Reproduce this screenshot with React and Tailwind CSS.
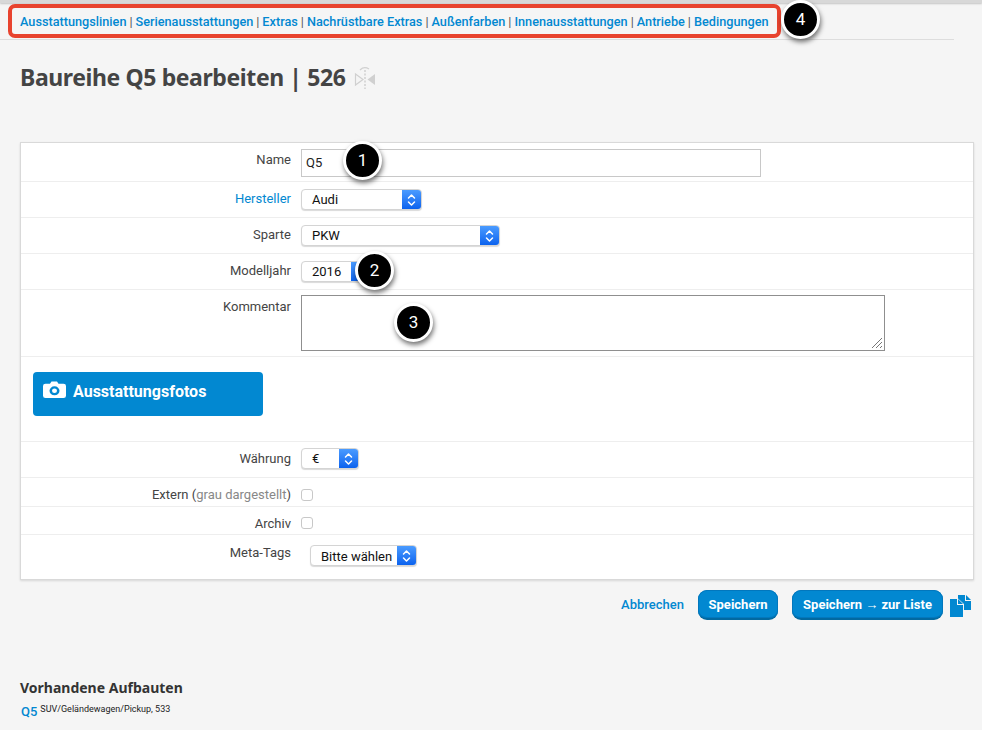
const links = [
  "Ausstattungslinien",
  "Serienausstattungen",
  "Extras",
  "Nachrüstbare Extras",
  "Außenfarben",
  "Innenausstattungen",
  "Antriebe",
  "Bedingungen",
];

// nummerierter Marker aus der Anleitung
function Marker({ n, className }) {
  return (
    <div
      className={`absolute w-[39px] h-[39px] rounded-full bg-black border-[3px] border-white text-white flex items-center justify-center text-[17px] shadow-[1px_3px_5px_rgba(0,0,0,0.55)] ${className}`}
    >
      {n}
    </div>
  );
}

function MacSelect({ label, width, textClass = "leading-[19px]" }) {
  return (
    <div
      className="h-[21px] flex items-stretch rounded-[4px] bg-white border border-[#d4d4d4] shadow-[0_1px_1px_rgba(0,0,0,0.15)] overflow-hidden"
      style={{ width }}
    >
      <span className={`flex-1 pl-[10px] text-[13px] text-[#111] ${textClass}`}>{label}</span>
      <span className="w-[19px] bg-gradient-to-b from-[#4a9bff] to-[#0a62ee] flex items-center justify-center">
        <svg width="9" height="14" viewBox="0 0 9 14" fill="none" stroke="white" strokeWidth="1.5" strokeLinecap="round" strokeLinejoin="round">
          <path d="M1.5 5 L4.5 2 L7.5 5" />
          <path d="M1.5 9 L4.5 12 L7.5 9" />
        </svg>
      </span>
    </div>
  );
}

function Row({ label, className, labelClass, children }) {
  return (
    <div className={`flex border-b border-[#eeeeee] ${className}`}>
      <div className={`w-[270px] shrink-0 text-right text-[13px] leading-[16px] text-[#444] ${labelClass}`}>{label}</div>
      <div className="ml-[10px] flex-1">{children}</div>
    </div>
  );
}

function Check() {
  return <div className="w-[12px] h-[12px] rounded-[3px] bg-white border border-[#c8c8c8]" />;
}

export default function App() {
  return (
    <div
      className="relative w-[982px] h-[730px] overflow-hidden bg-[#f5f5f5]"
      style={{ fontFamily: "Roboto, 'Liberation Sans', sans-serif" }}
    >
      <div className="h-[3px] bg-[#d8d8d8] shadow-[0_1px_2px_rgba(0,0,0,0.2)]" />

      {/* Navigation */}
      <div className="w-[954px] h-[37px] pl-[20px] pt-[11px] border-b border-[#dddddd] text-[12.7px] leading-[16px] font-medium text-[#555] whitespace-nowrap">
        {links.map((l, i) => (
          <span key={l}>
            {i > 0 && <span className="font-normal mx-[3px]">|</span>}
            <a className="text-[#0288d1]">{l}</a>
          </span>
        ))}
      </div>

      {/* Titel */}
      <div className="pl-[20px] pt-[21px] h-[102px] flex items-start">
        <h1 className="text-[23px] leading-[33px] font-bold tracking-[-0.4px] text-[#444]" style={{ fontFamily: "'Noto Sans', sans-serif" }}>
          Baureihe Q5 bearbeiten | 526
        </h1>
        <svg className="ml-[9px] mt-[4px]" width="22" height="26" viewBox="0 0 22 26" fill="none">
          <path d="M11 5 V24" stroke="#d0d0d0" strokeWidth="1.5" strokeDasharray="2 1.5" />
          <path d="M6 5 Q10 1 15 4" stroke="#d0d0d0" strokeWidth="1.2" />
          <path d="M1.5 9 L9 14.5 L1.5 20 Z" stroke="#d0d0d0" strokeWidth="1.2" />
          <path d="M13.5 14.5 L21 9 V20 Z" fill="#d0d0d0" />
        </svg>
      </div>

      {/* Formular */}
      <div className="ml-[20px] w-[954px] h-[438px] bg-white border border-[#d9d9d9] shadow-[0_1px_2px_rgba(0,0,0,0.12)]">
        <Row label="Name" className="h-[39px] pt-[6px]" labelClass="pt-[3px]">
          <div className="w-[460px] h-[28px] border border-[#c8c8c8] pl-[4px] text-[13px] leading-[26px] text-[#222]">Q5</div>
        </Row>
        <Row label="Hersteller" className="h-[36px] pt-[7px]" labelClass="!text-[#0288d1] pt-[2px]">
          <MacSelect label="Audi" width={121} />
        </Row>
        <Row label="Sparte" className="h-[36px] pt-[7px]" labelClass="pt-[2px]">
          <MacSelect label="PKW" width={199} />
        </Row>
        <Row label="Modelljahr" className="h-[36px] pt-[7px]" labelClass="pt-[2px]">
          <MacSelect label="2016" width={70} />
        </Row>
        <Row label="Kommentar" className="h-[67px] pt-[5px]" labelClass="pt-[4px]">
          <div className="relative w-[584px] h-[56px] bg-white border border-[#8f8f8f]">
            <svg className="absolute right-[1px] bottom-[1px]" width="12" height="12" viewBox="0 0 12 12" stroke="#777" strokeWidth="1">
              <path d="M1 11 L11 1 M5 11 L11 5 M9 11 L11 9" />
            </svg>
          </div>
        </Row>
        <div className="h-[85px] border-b border-[#eeeeee] pl-[12px] pt-[15px]">
          <div className="w-[230px] h-[44px] rounded-[4px] bg-[#0288d1] flex items-start pl-[10px] pt-[9px] text-white">
            <svg width="23" height="17" viewBox="0 0 23 19" preserveAspectRatio="none">
              <path
                fill="white"
                fillRule="evenodd"
                d="M7 3 L8.5 0.5 H14 L15.5 3 H20.5 Q23 3 23 5.5 V16.5 Q23 19 20.5 19 H2.5 Q0 19 0 16.5 V5.5 Q0 3 2.5 3 Z M11.5 6 A5 5 0 1 0 11.5 16 A5 5 0 1 0 11.5 6 Z M11.5 8.5 A2.5 2.5 0 1 1 11.5 13.5 A2.5 2.5 0 1 1 11.5 8.5 Z"
              />
            </svg>
            <span className="ml-[7px] text-[16px] leading-[22px] font-bold">Ausstattungsfotos</span>
          </div>
        </div>
        <Row label="Währung" className="h-[36px] pt-[6px]" labelClass="pt-[3px]">
          <MacSelect label="€" width={58} />
        </Row>
        <Row
          label={<>Extern (<span className="text-[#888]">grau dargestellt</span>)</>}
          className="h-[29px] pt-[9px]"
        >
          <div className="pt-[2px]"><Check /></div>
        </Row>
        <Row label="Archiv" className="h-[28px] pt-[9px]">
          <div className="pt-[1px]"><Check /></div>
        </Row>
        <div className="flex h-[45px] pt-[10px]">
          <div className="w-[270px] shrink-0 text-right text-[13px] leading-[16px] text-[#444]">Meta-Tags</div>
          <div className="ml-[19px]"><MacSelect label="Bitte wählen" width={107} textClass="leading-[21px]" /></div>
        </div>
      </div>

      {/* Aktionen */}
      <div className="w-[971px] mt-[10px] flex justify-end items-center h-[30px] text-[13px] font-bold">
        <a className="text-[#0288d1] font-medium">Abbrechen</a>
        <button className="ml-[14px] w-[80px] h-[30px] pt-[1px] rounded-[9px] bg-[#0288d1] border-b-2 border-[#0269a0] shadow-[inset_0_0_0_1px_#0277bd] text-white">Speichern</button>
        <button className="ml-[14px] w-[151px] h-[30px] pt-[1px] rounded-[9px] bg-[#0288d1] border-b-2 border-[#0269a0] shadow-[inset_0_0_0_1px_#0277bd] text-white">Speichern → zur Liste</button>
        <svg className="ml-[7px] mt-[2px]" width="21" height="22" viewBox="0 0 21 22" fill="#0288d1">
          <path d="M8 0 H15 V6 H21 V15 H14 V9 L8 3.5 Z" />
          <path d="M16 0 L21 5 H16 Z" />
          <path d="M0 4 H7 V10 H13 V22 H0 Z" />
          <path d="M8 4 L13 9 H8 Z" />
        </svg>
      </div>

      {/* Aufbauten */}
      <div className="pl-[20px] mt-[58px]">
        <h2 className="text-[14px] leading-[20px] font-bold text-[#333]" style={{ fontFamily: "'Noto Sans', sans-serif" }}>
          Vorhandene Aufbauten
        </h2>
        <div className="flex items-start mt-[4px]">
          <span className="text-[13px] leading-[18px] font-medium text-[#0288d1] mt-[1px] ml-[1px]">Q5</span>
          <span className="ml-[3px] mt-[1px] text-[9px] leading-[12px] text-[#222]">SUV/Geländewagen/Pickup, 533</span>
        </div>
      </div>

      {/* Markierung + Nummern */}
      <div className="absolute left-[8px] top-[4px] w-[773px] h-[34px] rounded-[7px] border-4 border-[#e8432e]" />
      <Marker n="1" className="left-[343px] top-[141px]" />
      <Marker n="2" className="left-[355px] top-[251px]" />
      <Marker n="3" className="left-[394px] top-[303px]" />
      <Marker n="4" className="left-[781px] top-[0px]" />
    </div>
  );
}
